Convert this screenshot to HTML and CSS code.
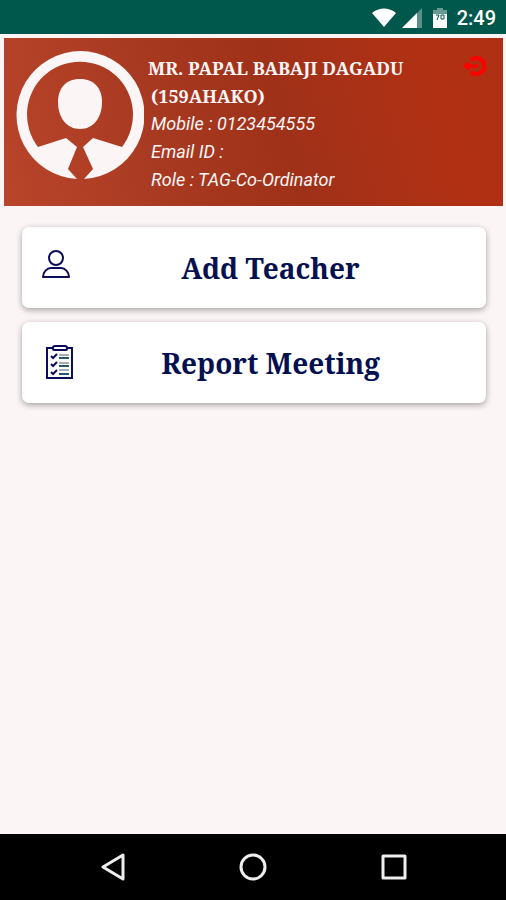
FILE: index.html
```
<!DOCTYPE html>
<html lang="en">
<head>
    <meta charset="UTF-8">
    <meta name="viewport" content="width=device-width, initial-scale=1.0">
    <title>Home</title>
    <link rel="stylesheet" href="styles.css">
</head>
<body>
    <div class="status-bar">
        <svg width="26" height="20" viewBox="0 0 26 20" aria-hidden="true">
            <path d="M1 5C8-1 18-1 25 5L13 19Z" fill="#fff"/>
        </svg>
        <svg width="22" height="22" viewBox="0 0 22 22" aria-hidden="true">
            <path d="M21 1V21H1Z" fill="#fff" fill-opacity="0.35"/>
            <path d="M16 6V21H1Z" fill="#fff"/>
        </svg>
        <svg class="battery" width="16" height="22" viewBox="0 0 16 22" aria-hidden="true">
            <path d="M5 1H11V3H15V8H1V3H5Z" fill="#fff" fill-opacity="0.4"/>
            <path d="M1 7H15V21H1Z" fill="#fff"/>
            <path d="M4 8H7L5 13M9 8H12V12H9Z" fill="none" stroke="#00574b"/>
        </svg>
        <span class="clock">2:49</span>
    </div>

    <header class="profile">
        <svg class="avatar" width="128" height="128" viewBox="0 0 128 128" aria-hidden="true">
            <path fill-rule="evenodd" d="M61 128L52 118L61 96L50 87L22 96A53 53 0 1 1 106 96L77 87L67 96L77 118L68 128A64 64 0 1 0 61 128Z"/>
            <path d="M64 28C79 28 86 38 86 51C86 67 77 78 64 78C51 78 42 67 42 51C42 38 49 28 64 28Z"/>
        </svg>
        <div class="details">
            <h1>MR. PAPAL BABAJI DAGADU <span class="code">(159AHAKO)</span></h1>
            <p>Mobile : 0123454555</p>
            <p>Email ID :</p>
            <p>Role : TAG-Co-Ordinator</p>
        </div>
        <button class="logout" type="button" aria-label="Log out">
            <svg width="24" height="24" viewBox="0 0 24 24" aria-hidden="true">
                <path d="M8 6A8 8 0 1 1 8 18" fill="none" stroke="#f00" stroke-width="4"/>
                <path d="M5 12H15" stroke="#f00" stroke-width="3"/>
                <path d="M0 12L6 7V17Z" fill="#f00"/>
            </svg>
        </button>
    </header>

    <main class="menu">
        <button class="card" type="button">
            <svg width="32" height="36" viewBox="0 0 32 36" fill="none" stroke="#0b0b57" stroke-width="2" aria-hidden="true">
                <circle cx="14" cy="8" r="7"/>
                <path d="M1 27C1 22 5 18 9 18H19C23 18 27 22 27 27Z" stroke-linejoin="round"/>
            </svg>
            <span>Add Teacher</span>
        </button>
        <button class="card" type="button">
            <svg width="32" height="36" viewBox="0 0 32 36" fill="none" stroke="#0b0b57" aria-hidden="true">
                <path d="M11 3H5V33H30V3H25" stroke-width="2"/>
                <path d="M11 4V3Q11 1 13 1H23Q25 1 25 3V4Q25 5 24 5H12Q11 5 11 4Z" stroke-width="2"/>
                <path d="M9 11L11 13L15 9M9 19L11 21L15 17M9 27L11 29L15 25" stroke-width="2"/>
                <path d="M17 10H27M17 18H27M17 25H27" stroke="#a5abb9" stroke-width="2"/>
                <path d="M17 13H27M17 21H27M17 29H27" stroke="#24567c" stroke-width="2"/>
            </svg>
            <span>Report Meeting</span>
        </button>
    </main>

    <nav class="nav-bar">
        <button type="button" aria-label="Back">
            <svg width="28" height="28" viewBox="0 0 28 28"><path d="M5 14L25 2V26Z"/></svg>
        </button>
        <button type="button" aria-label="Home">
            <svg width="28" height="28" viewBox="0 0 28 28"><circle cx="14" cy="14" r="12"/></svg>
        </button>
        <button type="button" aria-label="Recent apps">
            <svg width="28" height="28" viewBox="0 0 28 28"><rect x="3" y="3" width="22" height="22"/></svg>
        </button>
    </nav>
</body>
</html>
```
FILE: styles.css
```
* {
    box-sizing: border-box;
}

body {
    margin: 0;
    min-height: 100vh;
    display: flex;
    flex-direction: column;
    background: #fcf5f5;
    font-family: Roboto, sans-serif;
}

button {
    border: 0;
    padding: 0;
    background: none;
    cursor: pointer;
}

svg {
    display: block;
    flex: none;
}

.status-bar {
    display: flex;
    align-items: center;
    justify-content: flex-end;
    gap: 4px;
    height: 34px;
    padding: 2px 10px 0;
    background: #00574b;
    color: #fff;
}

.battery {
    margin: 0 5px;
}

.clock {
    font-size: 20px;
    font-weight: 500;
}

.profile {
    position: relative;
    display: flex;
    gap: 4px;
    margin: 4px 3px 0 4px;
    padding: 13px 12px 12px;
    background: linear-gradient(75deg, #b9452a 0%, #a93a22 30%, #9f3119 55%, #b13013 85%, #ae2f13 100%);
    color: #fcf5f5;
}

.avatar {
    fill: #fcf5f5;
}

.details {
    flex: 1;
    padding: 3px 48px 0 0;
    line-height: 28px;
}

.details h1 {
    margin: 0;
    font-family: "Noto Serif", "Droid Serif", "Liberation Serif", serif;
    font-size: 18px;
    font-weight: bold;
}

.details p,
.code {
    margin: 0;
    padding-left: 3px;
}

.code {
    display: block;
}

.details p {
    font-size: 18px;
    font-style: italic;
}

.logout {
    position: absolute;
    top: 16px;
    right: 16px;
}

.menu {
    flex: 1;
    display: flex;
    flex-direction: column;
    gap: 14px;
    padding: 21px 20px 21px 22px;
}

.card {
    display: flex;
    align-items: center;
    gap: 12px;
    height: 81px;
    padding: 0 20px;
    border-radius: 7px;
    background: #fff;
    box-shadow: 0 2px 6px rgba(0, 0, 0, 0.35);
    color: #04104f;
    font-family: "Noto Serif", "Droid Serif", "Liberation Serif", serif;
    font-size: 28px;
    font-weight: bold;
}

.card span {
    flex: 1;
    padding-right: 11px;
    text-align: center;
}

.nav-bar {
    display: flex;
    justify-content: space-between;
    align-items: center;
    height: 66px;
    padding: 0 98px;
    background: #000;
}

.nav-bar svg {
    fill: none;
    stroke: #eee;
    stroke-width: 3;
    stroke-linejoin: round;
}
```
